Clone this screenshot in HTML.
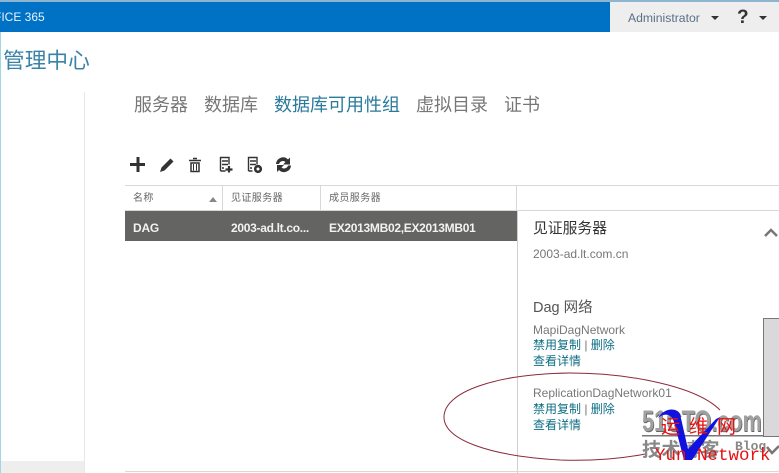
<!DOCTYPE html>
<html>
<head>
<meta charset="utf-8">
<style>
html,body{margin:0;padding:0;background:#fff}
#p{position:relative;width:779px;height:473px;overflow:hidden;background:#fff;font-family:"Liberation Sans","Noto Sans CJK SC",sans-serif}
.a{position:absolute;white-space:nowrap;line-height:1}
.l{color:#0f6f85;font-size:12px}
.g{color:#777;font-size:12px}
</style>
</head>
<body>
<div id="p">
<div class="a" style="left:0;top:0;width:779px;height:2px;background:#8db5d0"></div>
<div class="a" style="left:0;top:2px;width:610px;height:30px;background:#0072c6"></div>
<div class="a" style="left:610px;top:2px;width:169px;height:30px;background:#eeeeee"></div>
<div class="a" style="left:0;top:32px;width:1px;height:441px;background:#9fd8e4"></div>
<div class="a" style="left:-6px;top:11px;font-size:12px;color:#e8f2fa">FICE 365</div>
<div class="a" style="left:628px;top:12px;font-size:12.2px;color:#5b6f85">Administrator</div>
<div class="a" style="left:711px;top:16px;width:0;height:0;border:4px solid transparent;border-top:4px solid #333;border-bottom:0"></div>
<div class="a" style="left:737px;top:8px;font-size:19px;font-weight:bold;color:#333">?</div>
<div class="a" style="left:759px;top:16px;width:0;height:0;border:4px solid transparent;border-top:4px solid #333;border-bottom:0"></div>

<div class="a" style="left:3px;top:50px;font-size:21.700px;color:#3a83a6">管理中心</div>
<div class="a" style="left:84px;top:92px;width:1px;height:381px;background:#e8e8e8"></div>
<div class="a" style="left:1px;top:461px;width:83px;height:12px;background:#eeeeee"></div>

<div class="a" style="left:134px;top:96px;font-size:18px;color:#777">服务器</div>
<div class="a" style="left:204px;top:96px;font-size:18px;color:#777">数据库</div>
<div class="a" style="left:274px;top:96px;font-size:18px;color:#2a7a9c">数据库可用性组</div>
<div class="a" style="left:416px;top:96px;font-size:18px;color:#777">虚拟目录</div>
<div class="a" style="left:504px;top:96px;font-size:18px;color:#777">证书</div>

<svg class="a" style="left:125px;top:150px" width="175" height="28" viewBox="0 0 175 28">
<path d="M13 7v15M5 14.500h15" stroke="#333" stroke-width="3" fill="none"/>
<path d="M35 22l1.500-4.500 9-9 3 3-9 9z" fill="#333"/>
<path d="M64 10.500h12M68 8.500h4M66 13h8v8.500h-8z" stroke="#333" stroke-width="1.500" fill="none"/>
<path d="M68.500 14v6.500M71.500 14v6.500" stroke="#333" stroke-width="1"/>
<path d="M95.500 21V7.500h8.500v7M97 11h6M97 14.500h6M97 18h2M95.500 21h5" stroke="#333" stroke-width="1.400" fill="none"/>
<path d="M104 16v6.500M100.500 19.500h7" stroke="#333" stroke-width="2.200" fill="none"/>
<path d="M123.500 21V7.500h8.500v7M125 11h6M125 14.500h6M125 18h2M123.500 21h4" stroke="#333" stroke-width="1.400" fill="none"/>
<circle cx="133" cy="19" r="2.800" fill="none" stroke="#333" stroke-width="2.600"/>
<path d="M151 14a7 7 0 0 1 12-4.500l2-2v7h-7l2.500-2.500a4 4 0 0 0-6.500 2zM166 15.500a7 7 0 0 1-12 4.500l-2 2v-7h7l-2.500 2.500a4 4 0 0 0 6.500-2z" fill="#333"/>
</svg>

<div class="a" style="left:125px;top:185px;width:654px;height:1px;background:#d8d8d8"></div>
<div class="a" style="left:125px;top:210px;width:654px;height:1px;background:#d8d8d8"></div>
<div class="a" style="left:222px;top:186px;width:1px;height:24px;background:#d8d8d8"></div>
<div class="a" style="left:320px;top:186px;width:1px;height:24px;background:#d8d8d8"></div>
<div class="a" style="left:516px;top:186px;width:1px;height:24px;background:#d8d8d8"></div>
<div class="a" style="left:133px;top:194px;font-size:10px;letter-spacing:.4px;color:#666">名称</div>
<div class="a" style="left:209px;top:197px;width:0;height:0;border:4px solid transparent;border-bottom:5px solid #888;border-top:0"></div>
<div class="a" style="left:231px;top:194px;font-size:10px;letter-spacing:.4px;color:#666">见证服务器</div>
<div class="a" style="left:329px;top:194px;font-size:10px;letter-spacing:.4px;color:#666">成员服务器</div>

<div class="a" style="left:125px;top:211px;width:392px;height:30px;background:#646562"></div>
<div class="a" style="left:133px;top:222px;font-size:12px;font-weight:bold;letter-spacing:-.2px;color:#f2f2f2">DAG</div>
<div class="a" style="left:231px;top:222px;font-size:12px;font-weight:bold;letter-spacing:-.3px;color:#f2f2f2">2003-ad.lt.co...</div>
<div class="a" style="left:329px;top:222px;font-size:12px;font-weight:bold;letter-spacing:-.3px;color:#f2f2f2">EX2013MB02,EX2013MB01</div>

<div class="a" style="left:517px;top:211px;width:1px;height:262px;background:#cfcfcf"></div>
<div class="a" style="left:533px;top:222px;font-size:14.800px;color:#333">见证服务器</div>
<svg class="a" style="left:763px;top:226px" width="16" height="12"><path d="M2 10l6-6 6 6" stroke="#777" stroke-width="2.500" fill="none"/></svg>
<div class="a g" style="left:533px;top:248px">2003-ad.lt.com.cn</div>
<div class="a" style="left:533px;top:301px;font-size:14.500px;color:#555">Dag 网络</div>
<div class="a g" style="left:533px;top:324px">MapiDagNetwork</div>
<div class="a l" style="left:533px;top:339px">禁用复制 <span style="color:#777">|</span> 删除</div>
<div class="a l" style="left:533px;top:355px">查看详情</div>
<div class="a g" style="left:533px;top:387px">ReplicationDagNetwork01</div>
<div class="a l" style="left:533px;top:403px">禁用复制 <span style="color:#777">|</span> 删除</div>
<div class="a l" style="left:533px;top:419px">查看详情</div>

<div class="a" style="left:763px;top:318px;width:16px;height:119px;background:#d9d9dc;border-left:1px solid #777;border-top:1px solid #777;border-bottom:1px solid #777;box-sizing:border-box"></div>
<div class="a" style="left:125px;top:471px;width:654px;height:1px;background:#d8d8d8"></div>

<svg class="a" style="left:0;top:0" width="779" height="473">
<path d="M720 410C695 385 625 373 570 373C495 374 444 392 444 417C444 440 490 456 560 460C590 461 620 459 645 454" fill="none" stroke="#8a2a3a" stroke-width="1"/>
<path d="M767 447l5 6 7-7" stroke="#777" stroke-width="2.500" fill="none"/>
<rect x="642" y="435" width="122" height="1.500" fill="#777"/>
</svg>
<div class="a" style="left:642px;top:407px;font-size:30px;font-weight:bold;color:#a0a0a0;text-shadow:1px 1px 0 #666;transform:scaleX(.72);transform-origin:0 0">51CTO.com</div>
<div class="a" style="left:642px;top:441px;font-size:19px;letter-spacing:.5px;color:#888;font-weight:bold">技术博客</div>
<div class="a" style="left:735px;top:440px;font-family:'Liberation Mono',monospace;font-size:13px;font-weight:bold;color:#888">Blog</div>
<svg class="a" style="left:0;top:0" width="779" height="473">
<path d="M658 418C664 408 676 407 680 414L688 449L716 419L720 417L692 460L684 460L674 422C671 413 664 413 658 418Z" fill="#1212e0"/>
</svg>
<div class="a" style="left:661px;top:418px;font-size:19px;letter-spacing:9px;color:#e81010">运维网</div>
<div class="a" style="left:655px;top:448px;font-family:'Liberation Mono',monospace;font-size:17.500px;color:#e81010">Yun Network</div>
</div>
</body>
</html>
